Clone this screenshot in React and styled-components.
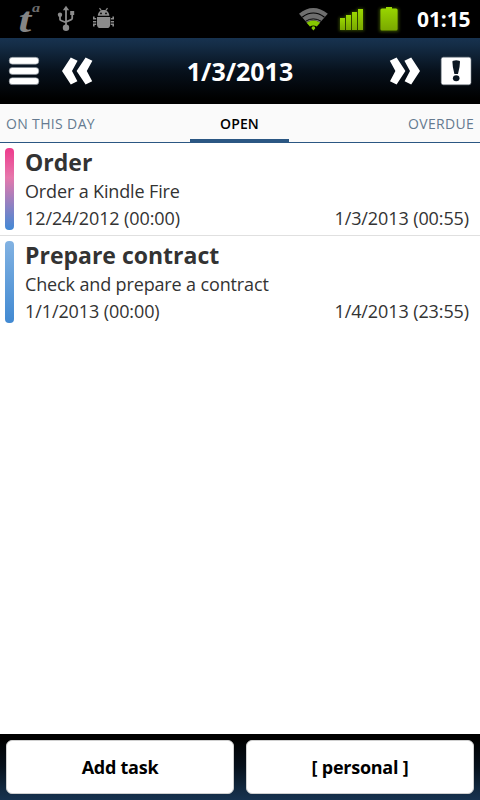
import React from "react";
import styled, { createGlobalStyle } from "styled-components";

const GlobalStyle = createGlobalStyle`
  * {
    box-sizing: border-box;
  }

  body {
    margin: 0;
    background: #ffffff;
    font-family: "Open Sans", "Noto Sans", sans-serif;
  }

  svg {
    display: block;
    flex: none;
  }
`;

const Screen = styled.div`
  width: 480px;
  height: 800px;
  display: flex;
  flex-direction: column;
  overflow: hidden;
  background: #ffffff;
`;

const StatusBar = styled.div`
  height: 38px;
  flex: none;
  display: flex;
  justify-content: space-between;
  background: #000000;
`;

const StatusGroup = styled.div`
  display: flex;
`;

const Clock = styled.div`
  width: 70px;
  padding-left: 7px;
  font-weight: 700;
  font-size: 21px;
  line-height: 38px;
  letter-spacing: -0.1px;
  white-space: nowrap;
  color: #ffffff;
`;

const Header = styled.header`
  height: 66px;
  flex: none;
  display: grid;
  grid-template-columns: 108px 264px 108px;
  background: linear-gradient(#17324f 0%, #142c45 12%, #07111c 50%, #000000 92%);
`;

const HeaderButtons = styled.div`
  display: flex;
`;

const IconButton = styled.button`
  width: ${(props) => props.$width}px;
  height: 66px;
  padding: 0;
  border: none;
  background: none;
`;

const HeaderTitle = styled.div`
  font-weight: 700;
  font-size: 25px;
  line-height: 66px;
  text-align: center;
  color: #ffffff;
`;

const Tabs = styled.nav`
  height: 39px;
  flex: none;
  display: grid;
  grid-template-columns: 190px 99px 191px;
  background: #fafafa;
  border-bottom: 1px solid #2b5783;
`;

const Tab = styled.div`
  height: 38px;
  padding: 0 6px;
  font-size: 14px;
  line-height: 39px;
  letter-spacing: ${(props) => props.$spacing || 0}px;
  text-align: ${(props) => props.$align || "left"};
  font-weight: ${(props) => (props.$active ? 600 : 400)};
  color: ${(props) => (props.$active ? "#000000" : "#657a90")};
  border-bottom: ${(props) => (props.$active ? "3px solid #2b5783" : "none")};
`;

const TaskList = styled.main`
  flex: 1;
`;

const Task = styled.div`
  height: 93px;
  display: flex;
  gap: 11px;
  padding: 5px 11px 5px 5px;
  border-bottom: 1px solid ${(props) => (props.$last ? "transparent" : "#e0e0e0")};
`;

const Priority = styled.div`
  width: 9px;
  height: 82px;
  flex: none;
  border-radius: 4px;
  background: linear-gradient(${(props) => props.$colors});
`;

const TaskBody = styled.div`
  flex: 1;
  color: #333333;
`;

const TaskTitle = styled.div`
  margin-bottom: 1px;
  font-weight: 700;
  font-size: 23px;
  line-height: 29px;
`;

const TaskText = styled.div`
  display: flex;
  justify-content: space-between;
  font-size: 18px;
  line-height: 27px;
  letter-spacing: ${(props) => props.$spacing || 0}px;
`;

const Footer = styled.footer`
  height: 66px;
  flex: none;
  display: grid;
  grid-template-columns: 1fr 1fr;
  gap: 12px;
  padding: 6px;
  background: linear-gradient(#000000 8%, #07111c 50%, #142c45 88%, #17324f 100%);
`;

const FooterButton = styled.button`
  height: 54px;
  padding: 0;
  border: 1px solid #d0d0d0;
  border-radius: 6px;
  background: #ffffff;
  color: #000000;
  font-family: inherit;
  font-weight: 700;
  font-size: 18px;
  line-height: 52px;
  letter-spacing: -0.25px;
`;

const LogoText = styled.text`
  font-family: "Liberation Serif", serif;
  font-style: italic;
  font-weight: 700;
  font-size: ${(props) => props.$size}px;
  fill: ${(props) => props.$color};
`;

const AppLogo = () => (
  <svg width="54" height="38" viewBox="0 0 54 38">
    <LogoText $size={35} $color="#858585" transform="translate(18.5 31.5) scale(1.3 1)">
      t
    </LogoText>
    <LogoText $size={13.5} $color="#6c6c6c" transform="translate(32 12.2) scale(1.2 1)">
      a
    </LogoText>
  </svg>
);

const NotificationIcons = () => (
  <svg width="62" height="38" viewBox="54 0 62 38">
    <g fill="none" stroke="#8c8c8c" strokeWidth="1.8">
      <path d="M66 10V27M60 15v4.2q0 1 1 1.3l5 2M72.2 14v4.2q0 1-1 1.4L66 22" />
    </g>
    <g fill="#8c8c8c">
      <path d="M66 5.8l3.2 4.4h-6.4z" />
      <circle cx="60" cy="14.8" r="2.2" />
      <path d="M70.2 11h4v4h-4z" />
      <circle cx="66" cy="27.8" r="3.2" />
      <path d="M97.8 15.8c0-3.4 2.5-5.7 5.7-5.7s5.8 2.3 5.8 5.7z" />
      <path d="M97 17h13.2v7.4q0 3.6-3.6 3.6h-6q-3.6 0-3.6-3.6z" />
    </g>
    <path d="M99.5 8.2l2 2.7M107.5 8.2l-2 2.7" fill="none" stroke="#8c8c8c" strokeWidth="1.2" />
    <path
      d="M93.8 16.5v2.3h2.4M93 21.8h3.2M93.8 26.5v-2.3h2.4M113.2 16.5v2.3h-2.4M114 21.8h-3.2M113.2 26.5v-2.3h-2.4"
      fill="none"
      stroke="#8c8c8c"
      strokeWidth="1.6"
    />
    <circle cx="101" cy="13.4" r=".9" fill="#000" />
    <circle cx="106" cy="13.4" r=".9" fill="#000" />
  </svg>
);

const SystemIcons = () => (
  <svg width="115" height="38" viewBox="295 0 115 38">
    <defs>
      <linearGradient id="green" x1="0" y1="0" x2="0" y2="1">
        <stop offset="0" stopColor="#9ad800" />
        <stop offset="1" stopColor="#7aa800" />
      </linearGradient>
      <filter id="glow" x="-40%" y="-30%" width="180%" height="160%">
        <feGaussianBlur stdDeviation="1.4" />
      </filter>
    </defs>
    <path d="M299 13.7Q306 8 313.3 8T327.8 13.7L319.8 22.8Q313.3 18 306.9 22.8z" fill="#6e6e6e" />
    <path d="M302.2 17.3Q307.5 13 313.3 13T324.5 17.3" fill="none" stroke="#000" strokeWidth="1.2" />
    <path d="M306.6 22.8Q313.3 18 320.1 22.8L316.8 26.4Q313.3 24.4 309.9 26.4z" fill="#86c800" />
    <path d="M305.7 21.2Q309 18.9 313.3 18.9T321.1 21.2" fill="none" stroke="#000" strokeWidth=".9" />
    <path d="M313.4 30.4l-1.9-2.2q0-1.9 1.9-1.9t1.9 1.9z" fill="#86c800" />
    <g opacity=".45" filter="url(#glow)" fill="#6b9900">
      <path d="M339 17.5h6v-3h6v-3h6v-3h7V31h-25z" />
      <rect x="379" y="8" width="20" height="24" rx="2" />
    </g>
    <g fill="url(#green)">
      <rect x="340" y="18" width="5" height="12" />
      <rect x="346" y="15" width="5" height="15" />
      <rect x="352" y="12" width="5" height="18" />
      <rect x="358" y="9" width="5" height="21" />
      <path d="M382 8.5h4V7h6v1.5h4q1.6 0 1.6 1.6v18.8q0 1.6-1.6 1.6h-14q-1.6 0-1.6-1.6V10.1q0-1.6 1.6-1.6z" />
    </g>
  </svg>
);

const MenuIcon = () => (
  <svg width="48" height="66" viewBox="0 38 48 66">
    <g fill="#fff" stroke="#7d8790" strokeWidth=".6">
      <rect x="9.2" y="57.3" width="29.6" height="6.9" rx="3.2" />
      <rect x="9.2" y="67.5" width="29.6" height="6.9" rx="3.2" />
      <rect x="9.2" y="77.7" width="29.6" height="6.9" rx="3.2" />
    </g>
  </svg>
);

const PreviousIcon = () => (
  <svg width="60" height="66" viewBox="48 38 60 66">
    <path
      d="M70.8 57.6L77.6 60.8 72 71 77.4 81.2 70.8 84.4 62 71zM85.6 57.6L92.4 60.8 86.8 71 92.2 81.2 85.6 84.4 76.6 71z"
      fill="#fff"
    />
  </svg>
);

const NextIcon = () => (
  <svg width="58" height="66" viewBox="372 38 58 66">
    <path
      d="M396.6 57.6L389.8 60.8 395.4 71 390 81.2 396.6 84.4 405.4 71zM411.2 57.6L404.4 60.8 410 71 404.6 81.2 411.2 84.4 420 71z"
      fill="#fff"
    />
  </svg>
);

const AlertIcon = () => (
  <svg width="50" height="66" viewBox="430 38 50 66">
    <rect x="441.2" y="57.2" width="29.8" height="27.6" rx="2.2" fill="#fff" stroke="#7d8790" strokeWidth=".6" />
    <path d="M452.4 61.7q0-1.5 3.8-1.5t3.8 1.5q0 5-2 12.2h-3.6q-2-7.2-2-12.2z" fill="#0b1621" />
    <ellipse cx="456.2" cy="78.2" rx="3.3" ry="3" fill="#0b1621" />
  </svg>
);

const tasks = [
  {
    title: "Order",
    text: "Order a Kindle Fire",
    start: "12/24/2012 (00:00)",
    end: "1/3/2013 (00:55)",
    colors: "#ee3a8c, #e678ac 36%, #4189d6",
  },
  {
    title: "Prepare contract",
    text: "Check and prepare a contract",
    start: "1/1/2013 (00:00)",
    end: "1/4/2013 (23:55)",
    colors: "#82b2e2, #4189d2",
  },
];

const App = () => {
  return (
    <>
      <GlobalStyle />
      <Screen>
        <StatusBar>
          <StatusGroup>
            <AppLogo />
            <NotificationIcons />
          </StatusGroup>
          <StatusGroup>
            <SystemIcons />
            <Clock>01:15</Clock>
          </StatusGroup>
        </StatusBar>
        <Header>
          <HeaderButtons>
            <IconButton $width={48} aria-label="Menu">
              <MenuIcon />
            </IconButton>
            <IconButton $width={60} aria-label="Previous day">
              <PreviousIcon />
            </IconButton>
          </HeaderButtons>
          <HeaderTitle>1/3/2013</HeaderTitle>
          <HeaderButtons>
            <IconButton $width={58} aria-label="Next day">
              <NextIcon />
            </IconButton>
            <IconButton $width={50} aria-label="Alerts">
              <AlertIcon />
            </IconButton>
          </HeaderButtons>
        </Header>
        <Tabs>
          <Tab $spacing={0.35}>ON THIS DAY</Tab>
          <Tab $active $align="center" $spacing={0.15}>
            OPEN
          </Tab>
          <Tab $align="right" $spacing={0.3}>
            OVERDUE
          </Tab>
        </Tabs>
        <TaskList>
          {tasks.map((task, index) => (
            <Task key={task.title} $last={index === tasks.length - 1}>
              <Priority $colors={task.colors} />
              <TaskBody>
                <TaskTitle>{task.title}</TaskTitle>
                <TaskText $spacing={-0.14}>{task.text}</TaskText>
                <TaskText $spacing={-0.1}>
                  <span>{task.start}</span>
                  <span>{task.end}</span>
                </TaskText>
              </TaskBody>
            </Task>
          ))}
        </TaskList>
        <Footer>
          <FooterButton>Add task</FooterButton>
          <FooterButton>[ personal ]</FooterButton>
        </Footer>
      </Screen>
    </>
  );
};

export default App;
